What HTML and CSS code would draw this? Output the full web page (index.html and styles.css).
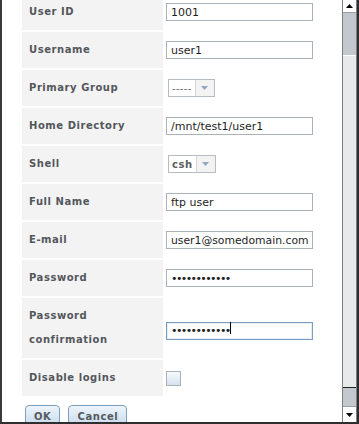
FILE: index.html
```html
<!DOCTYPE html>
<html>
<head>
<meta charset="utf-8">
<link rel="stylesheet" href="styles.css">
</head>
<body>
<div class="window">
  <div class="viewport">
    <form class="form">
      <div class="grid">
        <div class="label">User ID</div>
        <div class="field"><input class="text" type="text" value="1001"></div>

        <div class="label">Username</div>
        <div class="field"><input class="text" type="text" value="user1"></div>

        <div class="label">Primary Group</div>
        <div class="field">
          <span class="select"><span class="sel-value dashes">-----</span><span class="sel-arrow"><svg width="7" height="4" viewBox="0 0 7 4"><path d="M0 0H7L3.5 4Z" fill="#8fa7c1"/></svg></span></span>
        </div>

        <div class="label">Home Directory</div>
        <div class="field"><input class="text" type="text" value="/mnt/test1/user1"></div>

        <div class="label">Shell</div>
        <div class="field">
          <span class="select"><span class="sel-value bold">csh</span><span class="sel-arrow"><svg width="7" height="4" viewBox="0 0 7 4"><path d="M0 0H7L3.5 4Z" fill="#8fa7c1"/></svg></span></span>
        </div>

        <div class="label">Full Name</div>
        <div class="field"><input class="text" type="text" value="ftp user"></div>

        <div class="label">E-mail</div>
        <div class="field"><input class="text email" type="text" value="user1@somedomain.com"></div>

        <div class="label">Password</div>
        <div class="field"><input class="text pw" type="password" value="aaaaaaaaaaaa"></div>

        <div class="label">Password<br>confirmation</div>
        <div class="field"><span class="pw-wrap"><input class="text pw focused" type="password" value="aaaaaaaaaaaa"><span class="caret"></span></span></div>

        <div class="label">Disable logins</div>
        <div class="field"><span class="check"></span></div>
      </div>
      <div class="buttons">
        <button type="button" class="btn">OK</button>
        <button type="button" class="btn">Cancel</button>
      </div>
    </form>
  </div>
  <div class="scrollbar">
    <div class="sb-btn up"><svg width="7" height="4" viewBox="0 0 7 4"><path d="M0 4H7L3.5 0Z" fill="#000"/></svg></div>
    <div class="sb-track">
      <div class="sb-gap top"></div>
      <div class="sb-thumb"></div>
      <div class="sb-gap bottom"></div>
    </div>
    <div class="sb-btn down"><svg width="7" height="4" viewBox="0 0 7 4"><path d="M0 0H7L3.5 4Z" fill="#000"/></svg></div>
  </div>
</div>
</body>
</html>
```

FILE: styles.css
```css
* { box-sizing: border-box; }
html, body { margin: 0; padding: 0; background: #fff; }
body { width: 359px; height: 424px; overflow: hidden; font-family: "DejaVu Sans", sans-serif; }

.window {
  display: flex;
  height: 424px;
  border-left: 2px solid #3a3a3a;
  border-bottom: 2px solid #2e2e2e;
  border-right: 2px solid #2e2e2e;
}

.viewport {
  flex: 1;
  overflow: hidden;
  background: #fff;
}

.form {
  margin: -6px 0 0 0;
  padding-left: 20px;
}

.grid {
  display: grid;
  grid-template-columns: 141px 1fr;
  column-gap: 3px;
  row-gap: 2px;
}

.label {
  background: #f3f3f3;
  padding: 6px 7px;
  line-height: 24px;
  font-size: 10px;
  font-weight: bold;
  letter-spacing: 0.55px;
  color: #53575d;
}

.field {
  display: flex;
  align-items: center;
}

.text {
  width: 147px;
  height: 18px;
  margin: 0;
  border: 1px solid #aab2bb;
  border-radius: 0;
  padding: 0 2px 0 4px;
  font-family: "DejaVu Sans", sans-serif;
  font-size: 11px;
  color: #1e1e1e;
  background: #fff;
  outline: none;
}

.email { font-size: 10.8px; padding-right: 0; }

.pw { letter-spacing: -1.6px; font-size: 11px; }

.focused {
  border-color: #7c9dc0;
  box-shadow: inset 0 0 0 1px #e4edf5;
}

.pw-wrap { position: relative; display: inline-block; height: 18px; }
.caret {
  position: absolute;
  left: 64px;
  top: 3px;
  width: 1px;
  height: 12px;
  background: #000;
}

.select {
  display: inline-flex;
  height: 18px;
  margin-left: 2px;
  border: 1px solid #b7bcc2;
  background: #fff;
}
.sel-value {
  display: flex;
  align-items: center;
  padding: 0 3px;
  min-width: 24px;
  font-size: 10px;
  color: #666;
}
.sel-value.dashes { letter-spacing: 0.3px; color: #6a6a6a; }
.sel-value.bold { font-weight: bold; letter-spacing: 0.5px; color: #5a5e63; padding: 0 3px; }
.sel-arrow {
  width: 19px;
  display: flex;
  align-items: center;
  justify-content: center;
  background: #f3f3f3;
  border-left: 1px solid #d6d6d6;
}

.check {
  display: inline-block;
  width: 15px;
  height: 15px;
  border: 1px solid #a9b1b9;
  background: linear-gradient(#f7fafd, #d5e2ee);
}

.buttons {
  display: flex;
  gap: 8px;
  margin-top: 9px;
  padding-left: 3px;
}
.btn {
  height: 22px;
  margin: 0;
  padding: 2px 8px 2px;
  border: 1px solid #7f9fbf;
  border-radius: 4px 4px 0 0;
  background: linear-gradient(#eef4fa, #c8dbee);
  font-family: "DejaVu Sans", sans-serif;
  font-size: 10px;
  font-weight: bold;
  letter-spacing: 0.6px;
  color: #55595f;
  line-height: 18px;
  display: flex;
  align-items: flex-start;
}

.scrollbar {
  width: 15px;
  display: flex;
  flex-direction: column;
  border-left: 1px solid #7a7f84;
  border-right: 1px solid #7a7f84;
  background: #c2c8cd;
}
.sb-btn {
  height: 13px;
  background: #fff;
  display: flex;
  align-items: center;
  justify-content: center;
}
.sb-btn.up { border-bottom: 1px solid #9aa0a5; }
.sb-btn.down { height: 16px; border-top: 1px solid #9aa0a5; }
.sb-track { flex: 1; display: flex; flex-direction: column; }
.sb-gap.top { height: 42px; }
.sb-thumb {
  height: 333px;
  background: #e7e9eb;
  border-top: 1px solid #fff;
  border-bottom: 1px solid #222;
}
.sb-gap.bottom { flex: 1; }
```
